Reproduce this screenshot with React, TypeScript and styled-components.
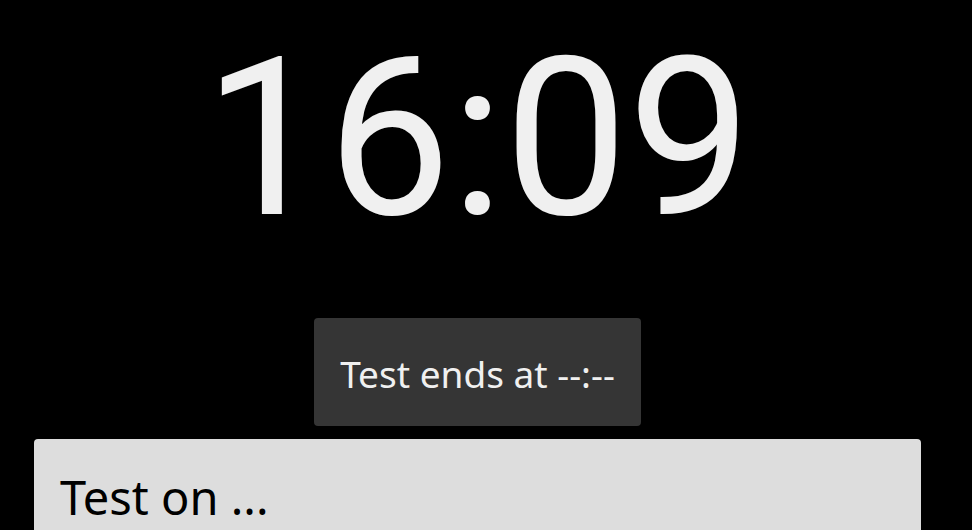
import styled, { createGlobalStyle } from 'styled-components'

const GlobalStyle = createGlobalStyle`
  html, body {
    margin: 0;
    padding: 0;
    background: #000;
    font-family: "Noto Sans", "Open Sans", sans-serif;
  }
`

// the reference leaves a 17px strip on the right (scrollbar gutter)
const Page = styled.div`
  width: 955px;
  display: flex;
  flex-direction: column;
  align-items: center;
`

const Clock = styled.h1`
  margin: 29px 0 0;
  font-family: Roboto, "Noto Sans", sans-serif;
  font-size: 220px;
  font-weight: 400;
  line-height: 1;
  color: #f0f0f0;
`

const EndsBox = styled.div`
  margin-top: 69px;
  padding: 29px 26px 25px;
  background: #353535;
  border-radius: 4px;
  color: #f0f0f0;
  font-size: 37px;
  line-height: 54px;
`

const TestPanel = styled.section`
  box-sizing: border-box;
  width: 887px;
  height: 200px;
  margin-top: 13px;
  padding: 26px 26px;
  background: #dddddd;
  border-radius: 4px;
  color: #000;
`

const PanelTitle = styled.h2`
  margin: 0;
  font-size: 47px;
  font-weight: 400;
  line-height: 64px;
`

function App() {
  return (
    <>
      <GlobalStyle />
      <Page>
        <Clock>16:09</Clock>
        <EndsBox>Test ends at --:--</EndsBox>
        <TestPanel>
          <PanelTitle>Test on ...</PanelTitle>
        </TestPanel>
      </Page>
    </>
  )
}

export default App
